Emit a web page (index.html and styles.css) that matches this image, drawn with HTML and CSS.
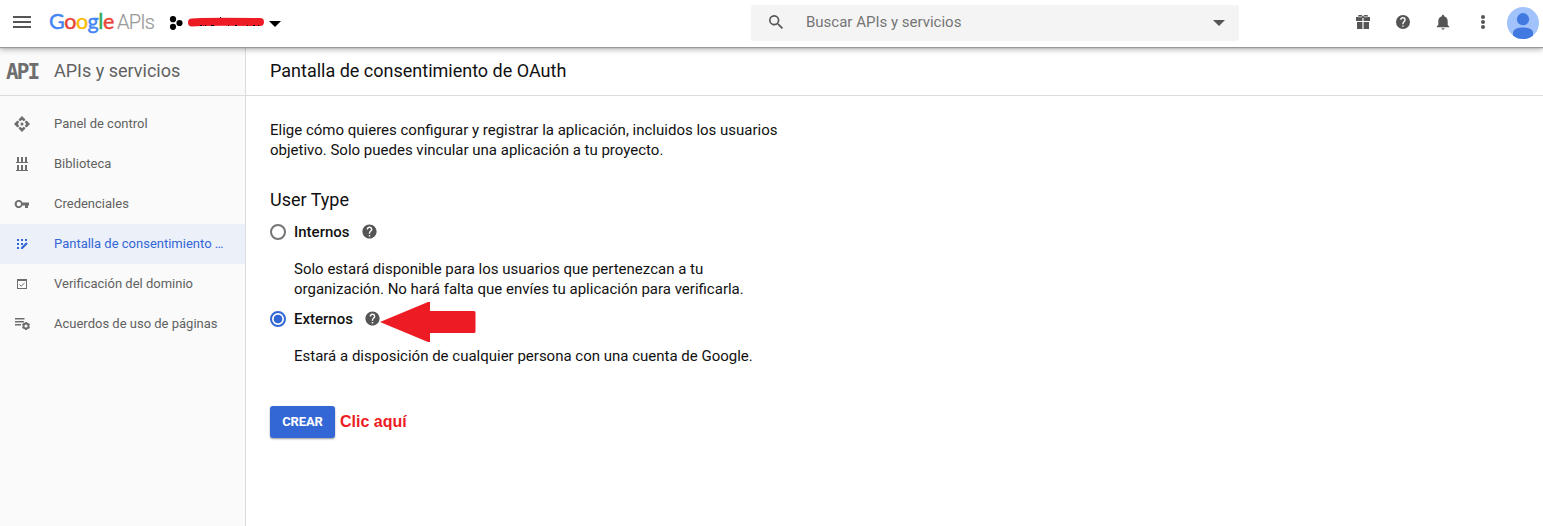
FILE: index.html
```html
<!DOCTYPE html>
<html lang="es">
<head>
<meta charset="utf-8">
<title>Pantalla de consentimiento de OAuth</title>
<link rel="stylesheet" href="styles.css">
</head>
<body>
<svg class="defs" aria-hidden="true">
  <symbol id="help" viewBox="0 0 24 24"><path d="M12 2C6.480 2 2 6.480 2 12s4.480 10 10 10 10-4.480 10-10S17.520 2 12 2zm1 17h-2v-2h2v2zm2.070-7.750l-.9.920C13.450 12.900 13 13.500 13 15h-2v-.5c0-1.100.45-2.100 1.170-2.830l1.240-1.260c.37-.36.590-.86.590-1.410 0-1.100-.9-2-2-2s-2 .9-2 2H8c0-2.210 1.790-4 4-4s4 1.790 4 4c0 .88-.36 1.680-.93 2.250z"/></symbol>
</svg>
<header class="topbar">
  <svg class="menu" viewBox="0 0 18 12"><path d="M0 0h18v2H0zM0 5h18v2H0zM0 10h18v2H0z"/></svg>
  <div class="brand"><span class="google"><span class="b">G</span><span class="r">o</span><span class="y">o</span><span class="b">g</span><span class="g">l</span><span class="r">e</span></span><span class="apis">APIs</span></div>
  <div class="project">
    <svg class="hex" viewBox="0 0 14 14"><circle cx="4" cy="3.200" r="3.100"/><circle cx="10.500" cy="7" r="3.100"/><circle cx="4" cy="10.800" r="3.100"/></svg>
    <svg class="redacted" viewBox="0 0 78 10"><path class="scribble" d="M5 5.500L14 5L35 4.800L73 5"/><path class="specks" d="M33 0h1v1h-1zM13 8h2v1h-2zM18 8h1v1h-1zM24 8h3v1h-3zM41 8h1v1h-1zM48 8h2v1h-2zM60 8h1v1h-1zM66 8h2v1h-2zM71 8h1v1h-1z"/></svg>
    <svg class="caret" viewBox="0 0 12 6"><path d="M0 0h12L6 6z"/></svg>
  </div>
  <div class="search">
    <svg class="magnifier" viewBox="0 0 14 14"><path d="M10 8.800h-.63l-.22-.21a5.150 5.150 0 1 0-.56.56l.21.220V10l4 4 1.200-1.200zM5.200 8.800a3.580 3.580 0 1 1 0-7.160 3.580 3.580 0 0 1 0 7.160z"/></svg>
    <span>Buscar APIs y servicios</span>
    <svg class="search-caret" viewBox="0 0 12 6"><path d="M0 0h12L6 6z"/></svg>
  </div>
  <nav class="tools">
    <svg viewBox="0 0 16 16"><path d="M1 3h2.500L3 1.500l1-.5h2.500L8 2.200 9.500 1H12l1 .5-.5 1.500H15v4H8.600V4H7.400v3H1zM2 8h5.400v7H2zM8.600 8H14v7H8.600z"/><path class="ribbon" d="M3.500 2.800h3.700M8.800 2.800h3.700"/></svg>
    <svg viewBox="0 0 24 24" ><path d="M12 1.500a10.500 10.500 0 1 0 0 21 10.500 10.500 0 0 0 0-21zm1 17.800h-2.100v-2.100H13zm2.200-8.100l-1 1c-.75.750-1.200 1.400-1.200 3h-2.100v-.6c0-1.200.5-2.200 1.200-3l1.300-1.300c.4-.4.600-.9.600-1.500a2.100 2.100 0 0 0-4.200 0H7.700a4.200 4.200 0 0 1 8.400 0c0 .9-.3 1.700-.9 2.400z"/></svg>
    <svg viewBox="0 0 16 16"><path d="M8 15.600c.9 0 1.500-.6 1.500-1.400h-3c0 .8.600 1.400 1.500 1.400zM12.700 11V7.200c0-2.400-1.300-4.300-3.600-4.900V1.900a1.100 1.100 0 0 0-2.200 0v.4C4.600 2.900 3.300 4.800 3.300 7.200V11L1.800 12.500v.8h12.400v-.8z"/></svg>
    <svg viewBox="0 0 16 16"><circle cx="8" cy="3" r="2"/><circle cx="8" cy="8" r="2"/><circle cx="8" cy="13" r="2"/></svg>
  </nav>
  <svg class="avatar" viewBox="0 0 32 32"><circle class="disc" cx="16" cy="16" r="16"/><circle cx="16" cy="12.200" r="6.100"/><path d="M6 28.500V26c0-3.500 4-5.500 10-5.500S26 22.500 26 26v2.500Q22 32 16 32T6 28.500z"/></svg>
</header>
<div class="layout">
  <aside class="sidebar">
    <div class="section"><span class="api">API</span><span class="section-name">APIs y servicios</span></div>
    <ul class="links">
      <li><svg viewBox="0 0 16 16"><path d="M8 0l3.200 3.200v1L9.700 5.200 8 3.800 6.300 5.200 4.800 4.200v-1zM8 16l3.200-3.200v-1L9.700 10.800 8 12.200l-1.700-1.400-1.500 1v1zM0 8l3.200-3.200h1l1 1.500L3.800 8l1.400 1.700-1 1.500h-1zM16 8l-3.200-3.200h-1l-1 1.500L12.200 8l-1.400 1.700 1 1.500h1z"/><circle cx="8" cy="8" r="1.500"/></svg><span>Panel de control</span></li>
      <li><svg viewBox="0 0 16 16"><path d="M2 6h12v1H2zM3 1h2v5H3zM7 1h2v5H7zM11 1h2v5h-2zM2 14h12v1H2zM3 9h2v5H3zM7 9h2v5H7zM11 9h2v5h-2z"/></svg><span>Biblioteca</span></li>
      <li><svg viewBox="0 0 16 16"><path fill-rule="evenodd" d="M8.500 6.500A4.100 4.100 0 1 0 8.500 9.500H11V12h3V9.500h1v-3zM4.800 10.200a2.200 2.200 0 1 1 0-4.400 2.200 2.200 0 0 1 0 4.400z"/></svg><span>Credenciales</span></li>
      <li class="current"><svg viewBox="0 0 16 16"><path d="M3 3h2v2H3zM7 3h2v2H7zM11 3h2v2h-2zM3 7h2v2H3zM7 7h2v2H7zM3 11h2v2H3zM7 11.400l5.200-5.200 1.600 1.600L8.600 13H7z"/></svg><span>Pantalla de consentimiento …</span></li>
      <li><svg viewBox="0 0 16 16"><path fill-rule="evenodd" d="M3 3h10v10H3zM4 5v7h8V5z"/><path class="tick" d="M5.500 8.500l1.700 1.700L10.500 7"/></svg><span>Verificación del dominio</span></li>
      <li><svg viewBox="0 0 16 16"><path d="M1 2h9.500v1.500H1zM1 5h9v1.400H1zM1 8h6v1.400H1z"/><circle class="gear" cx="12" cy="10" r="2.500"/><path class="teeth" d="M12 5.900v1.500M12 12.600v1.500M8.450 7.950l1.300.75M14.250 11.300l1.300.75M8.450 12.050l1.300-.75M14.250 8.700l1.300-.75"/></svg><span>Acuerdos de uso de páginas</span></li>
    </ul>
  </aside>
  <main class="content">
    <h1>Pantalla de consentimiento de OAuth</h1>
    <div class="body">
      <p class="intro">Elige cómo quieres configurar y registrar la aplicación, incluidos los usuarios<br>objetivo. Solo puedes vincular una aplicación a tu proyecto.</p>
      <h2>User Type</h2>
      <div class="option"><span class="radio"></span><strong>Internos</strong><svg class="help"><use href="#help"/></svg></div>
      <p class="hint">Solo estará disponible para los usuarios que pertenezcan a tu<br>organización. No hará falta que envíes tu aplicación para verificarla.</p>
      <div class="option external"><span class="radio checked"></span><strong>Externos</strong><svg class="help"><use href="#help"/></svg><svg class="arrow" viewBox="0 0 96 40"><path d="M0 20L48 0h2v9h44q1.500 0 1.500 1.500v19q0 1.500-1.500 1.500H50v9h-2z"/></svg></div>
      <p class="hint">Estará a disposición de cualquier persona con una cuenta de Google.</p>
      <div class="actions"><button type="button">CREAR</button><span class="note">Clic aquí</span></div>
    </div>
  </main>
</div>
</body>
</html>
```
FILE: styles.css
```css
* { box-sizing: border-box; }
body { margin: 0; height: 526px; overflow: hidden; background: #fff; color: #111; font-family: Roboto, sans-serif; }
svg { display: block; flex: none; }
.defs { width: 0; height: 0; position: absolute; }
h1, h2, p, ul { margin: 0; padding: 0; font-weight: 400; }

.topbar { position: relative; z-index: 1; display: flex; align-items: center; height: 47px; padding-left: 13px; background: #fff; box-shadow: 0 1px 1px #999, 0 2px 6px rgba(0,0,0,.35); }
.menu { width: 18px; height: 12px; margin-top: -3px; fill: #555; }
.brand { display: flex; align-items: baseline; height: 47px; padding: 6px 0 0 18px; line-height: 31px; }
.google { width: 68px; font-family: Lato, sans-serif; font-size: 21.500px; letter-spacing: -.45px; -webkit-text-stroke: .45px; }
.google .b { color: #4285f4; }
.google .r { color: #ea4335; }
.google .y { color: #fbbc05; }
.google .g { color: #34a853; }
.apis { width: 51px; color: #999; font-size: 20px; font-weight: 300; letter-spacing: -.8px; -webkit-text-stroke: .2px; }
.project { display: flex; align-items: center; }
.hex { width: 14px; height: 14px; margin: -1px 0 0 1px; }
.redacted { width: 78px; height: 10px; margin: -3px 0 0 4px; }
.scribble { fill: none; stroke: #ed1c24; stroke-width: 8; stroke-linecap: round; }
.caret { width: 12px; height: 6px; margin-left: 4px; }
.search { display: flex; align-items: center; width: 488px; height: 36px; margin: -2px 0 0 470px; padding: 0 14px 0 18px; border-radius: 2px; background: #f4f4f4; color: #757575; font-size: 15px; line-height: 36px; }
.search span { flex: 1; margin-top: -2px; padding-left: 23px; }
.magnifier { width: 14px; height: 14px; margin-top: -1px; fill: #555; }
.search-caret { width: 12px; height: 6px; fill: #555; }
.tools { display: flex; gap: 24px; margin: -3px 16px 0 116px; }
.tools svg { width: 16px; height: 16px; fill: #555; }
.ribbon { stroke: #fff; stroke-width: .7; }
.avatar { width: 32px; height: 32px; margin-top: -1px; fill: #4179e1; }
.disc { fill: #a1c2fa; }

.layout { display: flex; height: 479px; }
.sidebar { width: 246px; border-right: 1px solid #dcdcdc; background: #fafafa; color: #616161; }
.section { display: flex; align-items: center; height: 49px; padding-left: 6px; border-bottom: 1px solid #dcdcdc; font-size: 18px; }
.api { width: 48px; padding-top: 2px; font: bold 21px/46px "DejaVu Sans Mono", monospace; letter-spacing: -1.900px; color: #6e6e6e; }
.section-name { margin-top: -2px; }
.links { padding-top: 8px; list-style: none; font-size: 13px; }
.links li { display: flex; align-items: center; height: 40px; padding: 0 20px 0 14px; }
.links svg { width: 16px; height: 16px; margin-right: 24px; fill: #6e6e6e; }
.links span { margin-top: -2px; white-space: nowrap; }
.links .current { background: #ecf0f9; color: #3367d6; }
.links .current svg { fill: #3367d6; }
.tick { fill: none; stroke: #6e6e6e; stroke-width: 1; }
.gear { fill: none; stroke: #6e6e6e; stroke-width: 1.900; }
.teeth { stroke: #6e6e6e; stroke-width: 1.800; }

.content { flex: 1; }
h1 { height: 49px; padding-left: 24px; border-bottom: 1px solid #dcdcdc; font-size: 18px; line-height: 48px; }
.body { padding: 24px 24px 0; font-size: 15px; line-height: 20px; }
h2 { margin-top: 28px; font-size: 18px; line-height: 24px; }
.option { display: flex; align-items: center; height: 20px; margin-top: 10px; }
.option strong { font-weight: 500; }
.radio { width: 16px; height: 16px; margin-right: 8px; border: 2px solid #757575; border-radius: 50%; }
.checked { border-color: #3367d6; background: radial-gradient(circle, #3367d6 4px, #fff 4.700px); }
.help { width: 17px; height: 17px; margin: -2px 0 0 11.500px; fill: #555; }
.hint { padding: 17px 0 0 24px; }
.arrow { width: 96px; height: 40px; margin: 6px 0 0 -1px; fill: #ed1c24; }
.actions { display: flex; align-items: center; margin-top: 40px; }
button { width: 65px; height: 32px; padding: 0 0 1px; border: 0; border-radius: 3px; background: #3367d6; box-shadow: 0 1px 2px rgba(0,0,0,.4); color: #fff; font: 700 13px Roboto, sans-serif; letter-spacing: -.1px; }
.note { margin-left: 5px; color: #ed1c24; font: bold 16px "Liberation Sans", sans-serif; }
```
